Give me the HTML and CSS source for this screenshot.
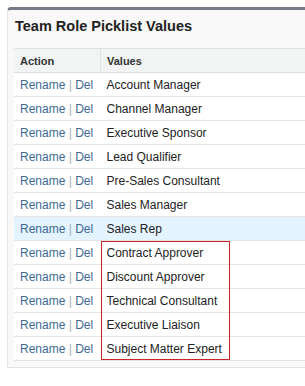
FILE: index.html
```html
<!DOCTYPE html>
<html lang="en">
<head>
    <meta charset="UTF-8">
    <meta name="viewport" content="width=device-width, initial-scale=1.0">
    <title>Team Role Picklist Values</title>
    <link rel="stylesheet" href="styles.css">
</head>
<body>
    <div class="panel">
        <h2 class="panel-title">Team Role Picklist Values</h2>

        <div class="table-wrap">
            <table class="picklist">
                <thead>
                    <tr>
                        <th class="col-action">Action</th>
                        <th>Values</th>
                    </tr>
                </thead>
                <tbody>
                    <tr><td class="col-action"><a href="#">Rename</a> <span class="sep">|</span> <a href="#">Del</a></td><td>Account Manager</td></tr>
                    <tr><td class="col-action"><a href="#">Rename</a> <span class="sep">|</span> <a href="#">Del</a></td><td>Channel Manager</td></tr>
                    <tr><td class="col-action"><a href="#">Rename</a> <span class="sep">|</span> <a href="#">Del</a></td><td>Executive Sponsor</td></tr>
                    <tr><td class="col-action"><a href="#">Rename</a> <span class="sep">|</span> <a href="#">Del</a></td><td>Lead Qualifier</td></tr>
                    <tr><td class="col-action"><a href="#">Rename</a> <span class="sep">|</span> <a href="#">Del</a></td><td>Pre-Sales Consultant</td></tr>
                    <tr><td class="col-action"><a href="#">Rename</a> <span class="sep">|</span> <a href="#">Del</a></td><td>Sales Manager</td></tr>
                    <tr class="highlight"><td class="col-action"><a href="#">Rename</a> <span class="sep">|</span> <a href="#">Del</a></td><td>Sales Rep</td></tr>
                    <tr><td class="col-action"><a href="#">Rename</a> <span class="sep">|</span> <a href="#">Del</a></td><td>Contract Approver</td></tr>
                    <tr><td class="col-action"><a href="#">Rename</a> <span class="sep">|</span> <a href="#">Del</a></td><td>Discount Approver</td></tr>
                    <tr><td class="col-action"><a href="#">Rename</a> <span class="sep">|</span> <a href="#">Del</a></td><td>Technical Consultant</td></tr>
                    <tr><td class="col-action"><a href="#">Rename</a> <span class="sep">|</span> <a href="#">Del</a></td><td>Executive Liaison</td></tr>
                    <tr><td class="col-action"><a href="#">Rename</a> <span class="sep">|</span> <a href="#">Del</a></td><td>Subject Matter Expert</td></tr>
                </tbody>
            </table>

            <!-- annotation box over the new values -->
            <div class="callout"></div>
        </div>
    </div>
</body>
</html>
```

FILE: styles.css
```css
:root {
    --bar-color: #767b85;
    --panel-bg: #f8f8f8;
    --panel-border: #e2e2e2;
    --head-bg: #f2f3f3;
    --row-border: #e3e3e3;
    --link-color: #3d6a94;
    --text-color: #222;
    --highlight: #e3f3ff;
}

body {
    margin: 0;
    font-family: Arial, 'Liberation Sans', Helvetica, sans-serif;
    color: var(--text-color);
    background: white;
    overflow: hidden;
}

.panel {
    width: 291px;
    margin: 7px 0 0 7px;
    padding: 0 0 6px 6px;
    background-color: var(--panel-bg);
    border-top: 3px solid var(--bar-color);
    border-left: 1px solid var(--panel-border);
    border-bottom: 1px solid var(--panel-border);
    border-top-left-radius: 4px;
}

.panel-title {
    margin: 0;
    padding: 6px 0 12px 1px;
    font-size: 14.5px;
    line-height: 20px;
    font-weight: bold;
    color: #222;
}

.table-wrap {
    position: relative;
}

.picklist {
    width: 100%;
    border-collapse: collapse;
    background-color: white;
    border-top: 1px solid #dfe1e3;
    font-size: 12px;
}

.picklist th {
    height: 23px;
    padding: 0 0 0 6px;
    background-color: var(--head-bg);
    border-bottom: 1px solid #dcdfe1;
    text-align: left;
    font-size: 11px;
    font-weight: bold;
    color: #333;
}

.picklist th.col-action {
    border-right: 1px solid #e0e3e5;
}

.picklist td {
    height: 23px;
    padding: 0 0 0 6px;
    border-bottom: 1px solid var(--row-border);
    white-space: nowrap;
}

.col-action {
    width: 80px;
}

.picklist a {
    color: var(--link-color);
    text-decoration: none;
}

.sep {
    color: #a9b4bd;
}

.highlight td {
    background-color: var(--highlight);
}

.callout {
    position: absolute;
    left: 87px;
    top: 193px;
    width: 127px;
    height: 117px;
    border: 1px solid #cc2229;
}
```
